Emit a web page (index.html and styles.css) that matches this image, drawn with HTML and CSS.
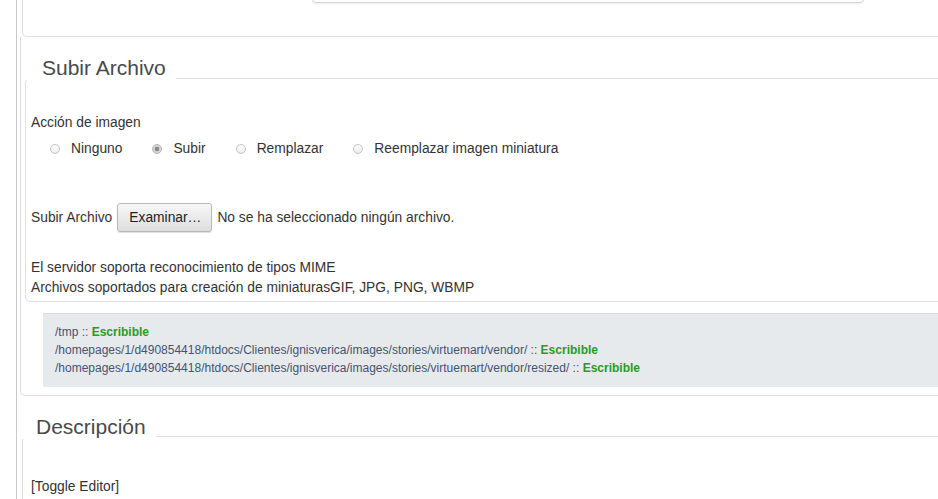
FILE: index.html
```html
<!DOCTYPE html>
<html lang="es">
<head>
<meta charset="utf-8">
<title>Subir Archivo</title>
<link rel="stylesheet" href="styles.css">
</head>
<body>
<div class="page">
  <div class="prev"><div class="prev-input"></div></div>

  <div class="outer">
    <div class="legend legend-upload">Subir Archivo</div>
    <div class="box upload-box">
      <div class="line">Acción de imagen</div>
      <div class="radios">
        <span class="opt"><span class="radio"></span><span class="opt-label">Ninguno</span></span>
        <span class="opt"><span class="radio checked"></span><span class="opt-label">Subir</span></span>
        <span class="opt"><span class="radio"></span><span class="opt-label">Remplazar</span></span>
        <span class="opt"><span class="radio"></span><span class="opt-label">Reemplazar imagen miniatura</span></span>
      </div>
      <div class="file-row">
        <span>Subir Archivo</span>
        <span class="btn">Examinar…</span>
        <span>No se ha seleccionado ningún archivo.</span>
      </div>
      <div class="info">El servidor soporta reconocimiento de tipos MIME<br>Archivos soportados para creación de miniaturasGIF, JPG, PNG, WBMP</div>
    </div>
    <div class="paths">
      <div>/tmp :: <b class="ok">Escribible</b></div>
      <div>/homepages/1/d490854418/htdocs/Clientes/ignisverica/images/stories/virtuemart/vendor/ :: <b class="ok">Escribible</b></div>
      <div>/homepages/1/d490854418/htdocs/Clientes/ignisverica/images/stories/virtuemart/vendor/resized/ :: <b class="ok">Escribible</b></div>
    </div>
  </div>

  <div class="desc">
    <div class="legend legend-desc">Descripción</div>
    <div class="box desc-box">
      <div class="line">[Toggle Editor]</div>
    </div>
  </div>
</div>
</body>
</html>
```
FILE: styles.css
```css
html, body {
  margin: 0;
  padding: 0;
  background: #fff;
  overflow: hidden;
}
body {
  font-family: "Liberation Sans", Arial, sans-serif;
  font-size: 13.8px;
  color: #333;
}
.page {
  margin-left: 16px;
  border-left: 1px solid #c9c9c9;
  width: 960px;
  min-height: 520px;
}
.prev {
  display: flow-root;
  margin-left: 5px;
  height: 36px;
  border-left: 1px solid #e0e0e0;
  border-bottom: 1px solid #e0e0e0;
  border-bottom-left-radius: 5px;
}
.prev-input {
  margin: -11px 0 0 289px;
  width: 550px;
  height: 12px;
  border: 1px solid #d4d4d4;
  border-radius: 0 0 4px 4px;
  box-shadow: 0 1px 2px rgba(0, 0, 0, 0.08);
}
.outer {
  display: flow-root;
  margin-left: 3px;
  padding: 19px 0 8px 0;
  border-left: 1px solid #dedede;
  border-bottom: 1px solid #dedede;
  border-bottom-left-radius: 5px;
}
.legend {
  position: relative;
  width: max-content;
  background: #fff;
  font-size: 21px;
  line-height: 24px;
  color: #4a4a4a;
}
.legend-upload {
  margin: 0 0 -2px 4px;
  padding: 0 10px 0 17px;
}
.box {
  border: 1px solid #e0e0e0;
  border-radius: 5px;
}
.upload-box {
  margin-left: 4px;
  padding: 34px 0 3px 5px;
}
.line {
  line-height: 19px;
}
.radios {
  display: flex;
  align-items: center;
  height: 19px;
  margin: 7px 0 0 19px;
}
.opt {
  display: flex;
  align-items: center;
  margin-right: 30px;
}
.radio {
  width: 8px;
  height: 8px;
  border: 1px solid #c4c4c4;
  border-radius: 50%;
  background: linear-gradient(#ffffff, #ececec);
  margin-right: 11px;
}
.radio.checked {
  border-color: #b4b4b4;
  background: radial-gradient(circle, #8a8a8a 0, #8a8a8a 2px, #d2d2d2 2.6px, #e4e4e4 100%);
}
.file-row {
  display: flex;
  align-items: center;
  gap: 5px;
  height: 29px;
  margin-top: 45px;
}
.btn {
  display: flex;
  align-items: center;
  height: 27px;
  padding: 0 10px 0 11px;
  border: 1px solid #b8b8b8;
  border-radius: 3px;
  background: linear-gradient(#f7f7f7, #dedede);
  box-shadow: 0 1px 1px rgba(0, 0, 0, 0.12);
  color: #222;
}
.info {
  margin-top: 26px;
  line-height: 20px;
}
.paths {
  margin: 11px 0 0 22px;
  padding: 9px 0 10px 12px;
  background: #e7eaed;
  border-top: 1px solid #d8dbde;
  font-size: 12px;
  line-height: 18px;
  color: #46536e;
}
.ok {
  color: #2a9a2a;
}
.desc {
  margin: 19px 0 0 5px;
}
.legend-desc {
  margin: 0 0 -3px 0;
  padding: 0 10px 0 14px;
}
.desc-box {
  padding: 40px 0 20px 8px;
}
```
